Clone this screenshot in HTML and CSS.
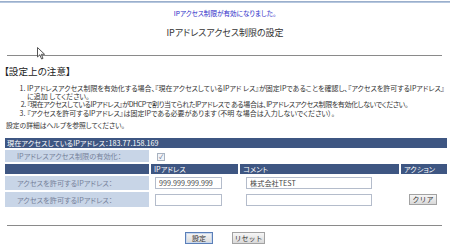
FILE: index.html
```html
<!DOCTYPE html>
<html lang="ja">
<head>
    <meta charset="UTF-8">
    <meta name="viewport" content="width=device-width, initial-scale=1.0">
    <link rel="stylesheet" href="styles.css">
    <title>IPアドレスアクセス制限の設定</title>
</head>
<body>
<div class="topline"></div>

<p class="notice">IPアクセス制限が有効になりました。</p>
<h1 class="title">IPアドレスアクセス制限の設定</h1>
<hr class="rule">

<h2 class="caution">【設定上の注意】</h2>
<ol class="notes">
    <li>IPアドレスアクセス制限を有効化する場合、『現在アクセスしているIPアド レス』が固定IPであることを確認し、『アクセスを許可するIPアドレス』<br>に追加 してください。</li>
    <li class="tight">『現在アクセスしているIPアドレス』がDHCPで割り当てられたIPアドレスで ある場合は、IPアドレスアクセス制限を有効化しないでください。</li>
    <li>『アクセスを許可するIPアドレス』は固定IPである必要があります（不明 な場合は入力しないでください）。</li>
</ol>
<p class="help">設定の詳細はヘルプを参照してください。</p>

<table class="settings">
    <tr>
        <td colspan="4" class="bar">現在アクセスしているIPアドレス：183.77.158.169</td>
    </tr>
    <tr class="enable">
        <td class="label">IPアドレスアクセス制限の有効化：</td>
        <td colspan="3" class="value"><span class="check">&#10003;</span></td>
    </tr>
    <tr class="head">
        <td></td>
        <td>IPアドレス</td>
        <td>コメント</td>
        <td>アクション</td>
    </tr>
    <tr class="entry">
        <td class="label">アクセスを許可するIPアドレス：</td>
        <td><input class="ip" type="text" value="999.999.999.999"></td>
        <td><input class="comment" type="text" value="株式会社TEST"></td>
        <td></td>
    </tr>
    <tr class="entry last">
        <td class="label">アクセスを許可するIPアドレス：</td>
        <td><input class="ip" type="text" value=""></td>
        <td><input class="comment" type="text" value=""></td>
        <td class="action"><button class="btn clear">クリア</button></td>
    </tr>
</table>

<hr class="rule bottom">

<div class="buttons">
    <button class="btn submit">設定</button>
    <button class="btn reset">リセット</button>
</div>

<!-- mouse pointer left over the page -->
<svg class="cursor" width="9" height="13" viewBox="0 0 9 13">
    <path d="M0.5 0.5 L0.5 10 L2.8 7.8 L4.6 12 L6 11.4 L4.3 7.3 L7.6 7.3 Z" fill="#fff" stroke="#555" stroke-width="1"/>
</svg>
</body>
</html>
```

FILE: styles.css
```css
body {
    margin: 0;
    position: relative;
    background-color: #fff;
    color: #333;
    font-family: "Noto Sans CJK JP", "Liberation Sans", sans-serif;
    font-feature-settings: "palt";
}

.topline {
    margin-top: 1px;
    height: 2px;
    background: linear-gradient(#8ea3c2, #c3d3e8);
}

.notice {
    margin: 5px 0 0;
    height: 10px;
    line-height: 10px;
    text-align: center;
    font-size: 6.6px;
    color: #2b2bc8;
}

.title {
    margin: 9px 0 0;
    height: 12px;
    line-height: 12px;
    text-align: center;
    font-size: 9px;
    font-weight: normal;
    color: #333;
}

.rule {
    margin: 16px 0 0 7px;
    width: 435px;
    height: 1px;
    border: 0;
    background-color: #8a8a8a;
}

.caution {
    margin: 9px 0 0 4px;
    height: 12px;
    line-height: 12px;
    font-size: 9.6px;
    font-weight: normal;
    color: #222;
}

.notes {
    margin: 6.5px 0 0;
    padding-left: 27px;
    font-size: 7px;
    line-height: 8.4px;
    color: #333;
}
.notes li {
    white-space: nowrap;
}
.notes .tight {
    letter-spacing: -0.4px;
}

.help {
    margin: 4px 0 0 6px;
    height: 9px;
    line-height: 9px;
    font-size: 6.8px;
    color: #333;
}

.settings {
    margin: 6px 0 0 3px;
    width: 446px;
    border-collapse: separate;
    border-spacing: 2px;
    font-size: 7.2px;
}
.settings td {
    padding: 0;
    vertical-align: middle;
    white-space: nowrap;
}

.bar {
    height: 10px;
    line-height: 10px;
    padding-left: 2px !important;
    background-color: #3e5682;
    color: #fff;
}

.label {
    width: 132px;
    padding-left: 12px !important;
    background-color: #c8d5e7;
    color: #76819a;
}

.enable td {
    height: 12px;
}
.value {
    padding-left: 6px !important;
}
.check {
    display: inline-block;
    width: 6px;
    height: 6px;
    border: 1px solid #a8b2c0;
    background-color: #f2f4f8;
    color: #4a5a80;
    font-size: 6px;
    line-height: 6px;
    text-align: center;
    vertical-align: middle;
}

.head td {
    height: 10px;
    line-height: 10px;
    background-color: #3e5682;
    color: #fff;
}
.head td + td {
    padding-left: 3px;
}
.head td:nth-child(2) {
    width: 84px;
}
.head td:nth-child(3) {
    width: 156px;
}

.entry td {
    height: 14px;
}
.entry.last td {
    height: 15px;
}

input {
    box-sizing: border-box;
    height: 12px;
    padding: 0 3px;
    border: 1px solid #b4bccb;
    font-family: "Noto Sans CJK JP", "Liberation Sans", sans-serif;
    font-size: 7.2px;
    color: #444;
    vertical-align: middle;
}
.ip {
    margin-left: 4px;
    width: 67px;
}
.comment {
    margin-left: 6px;
    width: 126px;
}

.btn {
    box-sizing: border-box;
    height: 11px;
    padding: 0;
    border: 1px solid #a2a2a2;
    background: linear-gradient(#f6f6f6, #d9d9d9);
    font-family: "Noto Sans CJK JP", "Liberation Sans", sans-serif;
    font-size: 7px;
    line-height: 9px;
    color: #333;
}
.clear {
    margin-left: 8px;
    width: 28px;
}

.buttons {
    margin-top: 6px;
    display: flex;
    justify-content: center;
    gap: 19px;
}
.buttons .btn {
    height: 12px;
}
.submit {
    width: 28px;
    border-color: #5b7fb8;
    box-shadow: inset 0 0 0 1px #c9d8ee;
}
.reset {
    width: 33px;
}

.cursor {
    position: absolute;
    left: 37px;
    top: 47px;
}
```
